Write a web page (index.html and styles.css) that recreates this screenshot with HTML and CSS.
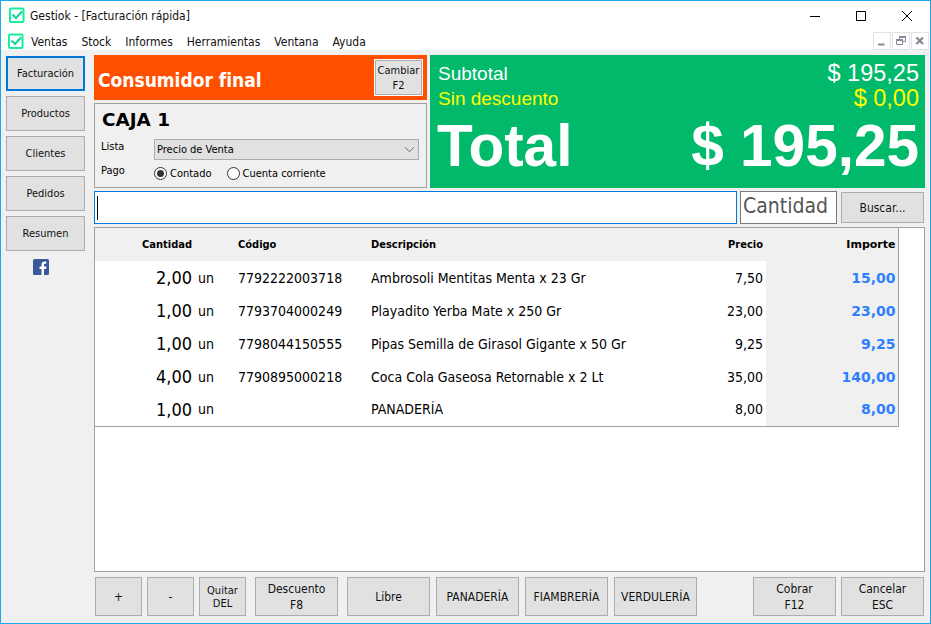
FILE: index.html
```html
<!DOCTYPE html>
<html lang="es">
<head>
<meta charset="utf-8">
<title>Gestiok - [Facturación rápida]</title>
<link rel="stylesheet" href="styles.css">
</head>
<body>
<div class="window">
  <header class="titlebar">
    <svg class="app-icon" viewBox="0 0 17 17"><path d="M2 2.500q0-1 1-1h11.500q1 0 1 1v11.500q0 1-1 1H3q-1 0-1-1z" fill="none" stroke="#14f09c" stroke-width="2"/><path d="M4.500 7.500l3.500 3.500 6-6.500" fill="none" stroke="#14d99a" stroke-width="2.200"/></svg>
    <span class="title-text">Gestiok - [Facturación rápida]</span>
    <div class="win-controls">
      <svg viewBox="0 0 46 30" class="win-btn"><path d="M18 15.500h10" stroke="#000" fill="none"/></svg>
      <svg viewBox="0 0 46 30" class="win-btn"><path d="M18.500 10.500h9v9h-9z" stroke="#000" fill="none"/></svg>
      <svg viewBox="0 0 46 30" class="win-btn"><path d="M18 10l10 10M28 10L18 20" stroke="#000" fill="none"/></svg>
    </div>
  </header>
  <nav class="menubar">
    <svg class="app-icon menu-icon" viewBox="0 0 17 17"><path d="M2 2.500q0-1 1-1h11.500q1 0 1 1v11.500q0 1-1 1H3q-1 0-1-1z" fill="none" stroke="#14f09c" stroke-width="2"/><path d="M4.500 7.500l3.500 3.500 6-6.500" fill="none" stroke="#14d99a" stroke-width="2.200"/></svg>
    <span>Ventas</span><span>Stock</span><span>Informes</span><span>Herramientas</span><span>Ventana</span><span>Ayuda</span>
    <div class="mdi-controls">
      <button class="mdi-btn"><svg viewBox="0 0 16 16"><path d="M4 10.500h6.500v2H4z" fill="#848b98"/></svg></button>
      <button class="mdi-btn"><svg viewBox="0 0 16 16"><path d="M6.500 3.500h6v5h-6zM3.500 6.500h6v5h-6z" fill="none" stroke="#848b98"/><path d="M6 3h7v2H6z" fill="#848b98"/><path d="M4 7h5v4H4z" fill="#fff"/><path d="M3 6h7v2H3z" fill="#848b98"/></svg></button>
      <button class="mdi-btn"><svg viewBox="0 0 16 16"><path d="M4.500 4.500l6.500 6.500M11 4.500l-6.500 6.500" stroke="#848b98" stroke-width="2.400" fill="none"/></svg></button>
    </div>
  </nav>
  <div class="main">
    <aside class="sidebar">
      <button class="btn side-btn focused">Facturación</button>
      <button class="btn side-btn">Productos</button>
      <button class="btn side-btn">Clientes</button>
      <button class="btn side-btn">Pedidos</button>
      <button class="btn side-btn">Resumen</button>
      <svg class="fb" viewBox="0 0 16 16"><rect width="16" height="16" rx="1.500" fill="#3b5998"/><path d="M11 16V10h2l.400-2.500H11V6c0-.800.300-1.200 1.200-1.200h1.100V2.600c-.500-.100-1.100-.100-1.800-.100-1.800 0-3 1.100-3 3.100v1.900H6.500V10h2v6z" fill="#fff"/></svg>
    </aside>
    <div class="content">
      <section class="top">
        <div class="top-left">
          <div class="customer">
            <span class="customer-name">Consumidor final</span>
            <button class="btn change">Cambiar<br>F2</button>
          </div>
          <div class="caja">
            <div class="caja-title">CAJA 1</div>
            <div class="caja-row">
              <span class="caja-label">Lista</span>
              <div class="select">Precio de Venta<svg viewBox="0 0 12 8" class="chev"><path d="M1 1.500l5 5 5-5" fill="none" stroke="#555"/></svg></div>
            </div>
            <div class="caja-row pay">
              <span class="caja-label">Pago</span>
              <span class="radio on"></span><span class="radio-label">Contado</span>
              <span class="radio"></span><span class="radio-label">Cuenta corriente</span>
            </div>
          </div>
        </div>
        <div class="totals">
          <div class="tot-line sub"><span>Subtotal</span><span class="tot-num">$ 195,25</span></div>
          <div class="tot-line disc"><span>Sin descuento</span><span class="tot-num">$ 0,00</span></div>
          <div class="tot-line grand"><span>Total</span><span>$ 195,25</span></div>
        </div>
      </section>
      <section class="search">
        <div class="search-input"><span class="caret"></span></div>
        <div class="qty-input">Cantidad</div>
        <button class="btn search-btn">Buscar...</button>
      </section>
      <section class="grid-box">
        <table class="items">
          <colgroup><col class="c-qty"><col class="c-un"><col class="c-code"><col class="c-desc"><col class="c-price"><col class="c-imp"></colgroup>
          <thead>
            <tr><th class="r">Cantidad</th><th></th><th>Código</th><th>Descripción</th><th class="r">Precio</th><th class="r imp-h">Importe</th></tr>
          </thead>
          <tbody>
            <tr><td class="qty">2,00</td><td class="un">un</td><td>7792222003718</td><td>Ambrosoli Mentitas Menta x 23 Gr</td><td class="r">7,50</td><td class="imp">15,00</td></tr>
            <tr><td class="qty">1,00</td><td class="un">un</td><td>7793704000249</td><td>Playadito Yerba Mate x 250 Gr</td><td class="r">23,00</td><td class="imp">23,00</td></tr>
            <tr><td class="qty">1,00</td><td class="un">un</td><td>7798044150555</td><td>Pipas Semilla de Girasol Gigante x 50 Gr</td><td class="r">9,25</td><td class="imp">9,25</td></tr>
            <tr><td class="qty">4,00</td><td class="un">un</td><td>7790895000218</td><td>Coca Cola Gaseosa Retornable x 2 Lt</td><td class="r">35,00</td><td class="imp">140,00</td></tr>
            <tr><td class="qty">1,00</td><td class="un">un</td><td></td><td>PANADERÍA</td><td class="r">8,00</td><td class="imp">8,00</td></tr>
          </tbody>
        </table>
      </section>
      <footer class="actions">
        <button class="btn a-sq big-sym">+</button>
        <button class="btn a-sq big-sym">-</button>
        <button class="btn a-sq small">Quitar<br>DEL</button>
        <button class="btn a-wide gap-l">Descuento<br>F8</button>
        <button class="btn a-wide gap-l">Libre</button>
        <button class="btn a-wide">PANADERÍA</button>
        <button class="btn a-wide">FIAMBRERÍA</button>
        <button class="btn a-wide">VERDULERÍA</button>
        <span class="spacer"></span>
        <button class="btn a-wide">Cobrar<br>F12</button>
        <button class="btn a-wide">Cancelar<br>ESC</button>
      </footer>
    </div>
  </div>
</div>
</body>
</html>
```

FILE: styles.css
```css
* { box-sizing: border-box; }
html, body { margin: 0; padding: 0; }
body { font-family: "DejaVu Sans Condensed", "Noto Sans", sans-serif; color: #000; overflow: hidden; }
.window { width: 931px; height: 624px; border: 1px solid #1ea5ea; background: #f0f0f0; display: flex; flex-direction: column; }

.titlebar { height: 29px; background: #fff; display: flex; align-items: center; padding-left: 7px; flex: none; }
.app-icon { width: 17px; height: 17px; flex: none; }
.title-text { font-size: 12px; margin-left: 5px; color: #111; }
.win-controls { margin-left: auto; display: flex; }
.win-btn { width: 46px; height: 30px; display: block; }

.menubar { height: 20px; background: #fff; display: flex; align-items: center; padding: 3px 0 0 6px; font-size: 12px; flex: none; gap: 14px; color: #111; }
.menu-icon { margin-right: -7px; }
.mdi-controls { margin-left: auto; margin-right: 1px; display: flex; gap: 1px; align-self: flex-end; }
.mdi-btn { width: 18px; height: 18px; padding: 0; border: 1px solid #e3e3e3; background: #fff; display: block; }
.mdi-btn svg { width: 16px; height: 16px; display: block; }

.main { flex: 1; display: flex; min-height: 0; }
.btn { font-family: "DejaVu Sans Condensed", "Noto Sans", sans-serif; background: #e1e1e1; border: 1px solid #adadad; color: #111; padding: 0; font-size: 12px; line-height: 16px; }

.sidebar { width: 93px; padding: 6px 0 0 5px; display: flex; flex-direction: column; flex: none; }
.side-btn { width: 79px; height: 35px; margin-bottom: 5px; font-size: 11px; }
.side-btn.focused { border: 2px solid #0078d7; }
.fb { width: 16px; height: 16px; align-self: flex-start; margin: 3px 0 0 27px; }

.content { flex: 1; padding-top: 5px; display: flex; flex-direction: column; min-width: 0; }
.top { display: flex; gap: 3px; height: 133px; flex: none; }
.top-left { width: 333px; display: flex; flex-direction: column; gap: 3px; flex: none; }
.customer { height: 45px; background: #ff5000; display: flex; align-items: center; justify-content: space-between; padding: 0 4px; flex: none; }
.customer-name { color: #fff; font: bold 19px/24px "DejaVu Sans Condensed", sans-serif; padding-top: 4px; }
.change { width: 49px; height: 37px; border: 1px solid #fff; box-shadow: inset 0 0 0 1px #adadad; font-size: 11px; line-height: 15px; }

.caja { flex: 1; border: 1px solid #a0a0a0; background: #f0f0f0; padding: 4px 7px 0 6px; }
.caja-title { font: bold 18.400px/24px "DejaVu Sans", sans-serif; margin-left: 1px; margin-bottom: 7px; }
.caja-row { display: flex; align-items: center; font-size: 11px; }
.caja-label { width: 53px; flex: none; position: relative; top: -3px; }
.select { flex: 1; height: 21px; background: #e1e1e1; border: 1px solid #adadad; display: flex; align-items: center; justify-content: space-between; padding: 0 3px 0 2px; }
.chev { width: 11px; height: 7px; }
.pay { margin-top: 3px; height: 20px; }
.radio { width: 13px; height: 13px; border-radius: 50%; border: 1px solid #333; background: #fff; flex: none; position: relative; }
.radio.on::after { content: ""; position: absolute; left: 2px; top: 2px; width: 7px; height: 7px; border-radius: 50%; background: #333; }
.radio-label { margin-left: 3px; margin-right: 15px; }

.totals { width: 495px; background: #00b96b; color: #fff; font-family: "Liberation Sans", sans-serif; padding: 6px 6px 0 8px; flex: none; }
.tot-line { display: flex; justify-content: space-between; }
.sub { font-size: 19px; line-height: 25px; }
.disc { font-size: 19px; line-height: 25px; color: #ff0; }
.tot-num { font-size: 23.500px; }
.grand { font-size: 58.500px; line-height: 70px; font-weight: bold; margin-left: -1px; }

.search { display: flex; height: 33px; margin-top: 3px; flex: none; }
.search-input { width: 643px; border: 1px solid #0078d7; background: #fff; display: flex; align-items: center; padding-left: 2px; }
.caret { width: 1px; height: 24px; background: #000; }
.qty-input { width: 97px; margin-left: 3px; border: 1px solid #7a7a7a; background: #fff; font-size: 21px; color: #555; line-height: 29px; padding-left: 2px; overflow: hidden; }
.search-btn { width: 83px; height: 31px; margin: 1px 0 0 4px; }

.grid-box { margin-top: 3px; width: 831px; height: 345px; border: 1px solid #a0a0a0; background: #fff; flex: none; }
.items { border-collapse: collapse; table-layout: fixed; width: 803px; border-right: 1px solid #a0a0a0; border-bottom: 1px solid #a0a0a0; }
.c-qty { width: 100px; } .c-un { width: 40px; } .c-code { width: 133px; } .c-desc { width: 310px; } .c-price { width: 88px; } .c-imp { width: 132px; }
.items th { height: 33px; background: #f0f0f0; font: bold 11px "DejaVu Sans Condensed", sans-serif; text-align: left; padding: 0 3px; }
.items td { height: 33px; font-size: 14px; padding: 0 3px; white-space: nowrap; }
.items .r { text-align: right; }
.items th.imp-h { padding-right: 2px; font-family: "DejaVu Sans", sans-serif; }
.items .qty { text-align: right; font-size: 18px; }
.items .un { font-size: 14px; }
.items .imp { text-align: right; background: #f0f0f0; color: #2e7fff; font: bold 14px "DejaVu Sans", sans-serif; padding-right: 2px; }

.actions { display: flex; margin-top: 5px; height: 39px; gap: 6px; flex: none; padding: 0 6px 0 1px; }
.a-sq { width: 47px; }
.a-sq + .a-sq { margin-left: -1px; }
.a-wide { width: 83px; }
.gap-l { margin-left: 3px; }
.small { font-size: 11px; line-height: 13px; }
.spacer { flex: 1; }
.a-wide:last-child { margin-left: -1px; }
```
